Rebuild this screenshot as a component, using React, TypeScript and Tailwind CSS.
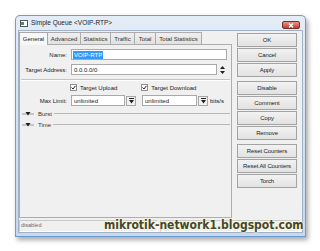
import React from "react";

const F = { fontFamily: '"Liberation Sans", Arial, sans-serif' };

function Check() {
  return (
    <div className="w-[7px] h-[7px] border border-[#8e8f8f] bg-white flex items-center justify-center">
      <svg width="5" height="5" viewBox="0 0 5 5">
        <path d="M0.5 2.5 L2 4 L4.5 0.8" stroke="#222" strokeWidth="1" fill="none" />
      </svg>
    </div>
  );
}

function DropBtn() {
  return (
    <div className="w-[10px] h-[10px] border border-[#a6a6a6] bg-[#f2f2f2] flex items-center justify-center">
      <svg width="5" height="6" viewBox="0 0 5 6">
        <rect x="0" y="0" width="5" height="1" fill="#222" />
        <path d="M0 2 L5 2 L2.5 5.5 Z" fill="#222" />
      </svg>
    </div>
  );
}

function Collapse({ label }: { label: string }) {
  return (
    <div className="flex items-center h-[9px] pl-[2px] pr-[1px]">
      <svg width="12" height="6" viewBox="0 0 12 6" className="shrink-0">
        <rect x="0" y="2.5" width="12" height="1" fill="#9a9a9a" />
        <path d="M3.5 1 L8.5 1 L6 4.5 Z" fill="#1e1e1e" />
      </svg>
      <span className="ml-[4px] text-[6px] text-[#333] leading-none">{label}</span>
      <div className="flex-1 h-px bg-[#b8b8b8] ml-[2px]" />
    </div>
  );
}

const Btn = ({ t }: { t: string }) => (
  <div className="h-[14px] w-[60px] border border-[#a3a3a3] bg-gradient-to-b from-[#f2f2f2] to-[#e2e2e2] flex items-center justify-center text-[6px] text-[#222] leading-none tracking-[-0.1px]">
    {t}
  </div>
);

const tabs: [string, number][] = [
  ["General", 29],
  ["Advanced", 33],
  ["Statistics", 30],
  ["Traffic", 24],
  ["Total", 21],
  ["Total Statistics", 46],
];

export default function App() {
  return (
    <div className="w-[320px] h-[251px] bg-white relative overflow-hidden" style={F}>
      <div className="ml-[15px] mt-[15px] w-[291px] h-[222px] flex flex-col border border-[#8498b3] rounded-t-[5px] bg-gradient-to-b from-[#e4ecf6] to-[#c7d8ed] shadow-[2px_3px_5px_rgba(0,0,0,0.35)] px-[2px] pb-[3px] border-b-[#6d9ad0]">
        {/* title bar */}
        <div className="h-[14px] flex items-center pl-[2px] relative">
          <svg width="8" height="7" viewBox="0 0 8 7">
            <rect x="0.5" y="0.5" width="7" height="6" fill="#fff" stroke="#556" />
            <rect x="1" y="2" width="3" height="3" fill="#3d9a4c" />
          </svg>
          <span className="ml-[3px] text-[6.5px] text-[#1e1e1e] leading-none">Simple Queue &lt;VOIP-RTP&gt;</span>
          <div className="absolute right-[3px] top-[5px] w-[18px] h-[8px] rounded-[2px] border border-[#7a2f28] bg-gradient-to-b from-[#e6968a] to-[#c2392b] flex items-center justify-center">
            <svg width="6" height="5" viewBox="0 0 6 5">
              <path d="M1 0.5 L5 4.5 M5 0.5 L1 4.5" stroke="#fff" strokeWidth="1.3" />
            </svg>
          </div>
        </div>
        {/* client */}
        <div className="flex-1 bg-[#f0f0f0] border border-[#9fb2ca] flex flex-col">
          <div className="flex flex-1">
            <div className="ml-[0px] flex flex-col w-[213px]">
              {/* tabs */}
              <div className="flex h-[13px] items-end">
                {tabs.map(([t, w], i) => (
                  <div
                    key={t}
                    style={{ width: w }}
                    className={
                      i === 0
                        ? "h-[13px] border border-b-0 border-[#a8a8a8] bg-[#f7f7f7] flex items-center justify-center text-[6px] text-[#222] leading-none relative top-px"
                        : "h-[12px] border border-b-0 border-l-0 border-[#acacac] bg-gradient-to-b from-[#efefef] to-[#e1e1e1] flex items-center justify-center text-[6px] text-[#333] leading-none"
                    }
                  >
                    {t}
                  </div>
                ))}
              </div>
              {/* panel */}
              <div className="h-[174px] border border-[#adadad] bg-[#f0f0f0] flex flex-col">
                <div className="flex items-center h-[11px] mt-[4px]">
                  <div className="w-[47px] text-right text-[6px] text-[#222] leading-none">Name:</div>
                  <div className="ml-[4px] w-[156px] h-[11px] border border-[#a9a9a9] bg-white flex items-center pl-px">
                    <span className="bg-[#3399ff] text-white text-[6px] leading-[8px] px-px">VOIP-RTP</span>
                  </div>
                </div>
                <div className="flex items-center h-[11px] mt-[4px]">
                  <div className="w-[47px] text-right text-[6px] text-[#222] leading-none">Target Address:</div>
                  <div className="ml-[4px] w-[146px] h-[11px] border border-[#a9a9a9] bg-white flex items-center pl-[2px] text-[6px] text-[#222] leading-none">
                    0.0.0.0/0
                  </div>
                  <svg width="5" height="8" viewBox="0 0 5 8" className="ml-[3px]">
                    <path d="M0 3 L5 3 L2.5 0 Z M0 5 L5 5 L2.5 8 Z" fill="#222" />
                  </svg>
                </div>
                <div className="mx-px mt-[4px] h-px bg-[#c4c4c4] border-b border-white box-content" />
                <div className="flex items-center h-[9px] mt-[2px] text-[6px] text-[#222] leading-none">
                  <div className="ml-[50px]"><Check /></div>
                  <span className="ml-[3px]">Target Upload</span>
                  <div className="ml-[24px]"><Check /></div>
                  <span className="ml-[3px]">Target Download</span>
                </div>
                <div className="flex items-center h-[11px] mt-[3px] text-[6px] text-[#222] leading-none">
                  <div className="w-[47px] text-right">Max Limit:</div>
                  <div className="ml-[4px] w-[54px] h-[11px] border border-[#a9a9a9] bg-white flex items-center pl-[2px]">unlimited</div>
                  <div className="ml-[1px]"><DropBtn /></div>
                  <div className="ml-[6px] w-[55px] h-[11px] border border-[#a9a9a9] bg-white flex items-center pl-[2px]">unlimited</div>
                  <div className="ml-[1px]"><DropBtn /></div>
                  <span className="ml-[2px]">bits/s</span>
                </div>
                <div className="mt-[3px]"><Collapse label="Burst" /></div>
                <div className="mt-[2px]"><Collapse label="Time" /></div>
              </div>
            </div>
            {/* buttons */}
            <div className="ml-[5px] pt-[2px] flex flex-col">
              <div className="flex flex-col gap-[1px]">
                <Btn t="OK" />
                <Btn t="Cancel" />
                <Btn t="Apply" />
              </div>
              <div className="flex flex-col gap-[1px] mt-[4px]">
                <Btn t="Disable" />
                <Btn t="Comment" />
                <Btn t="Copy" />
                <Btn t="Remove" />
              </div>
              <div className="flex flex-col gap-[1px] mt-[4px]">
                <Btn t="Reset Counters" />
                <Btn t="Reset All Counters" />
                <Btn t="Torch" />
              </div>
            </div>
          </div>
          {/* status bar */}
          <div className="flex h-[12px] mt-[2px] gap-[2px]">
            <div className="w-[139px] border border-[#c9c9c9] border-b-white border-r-white flex items-center pl-px text-[5.5px] text-[#666] leading-none">disabled</div>
            <div className="flex-1 mr-px border border-[#c9c9c9] border-b-white border-r-white" />
          </div>
        </div>
      </div>
      <div
        className="absolute left-[104px] top-[219px] text-[12px] font-bold text-[#45453a] leading-none whitespace-nowrap"
        style={{ fontFamily: '"DejaVu Sans Condensed", "DejaVu Sans", sans-serif', fontStretch: "condensed", textShadow: "0 0 2px #ffffd0, 0 0 1px #ffffd0, 0 0 3px #ffffc0" }}
      >
        mikrotik-network1.blogspot.com
      </div>
    </div>
  );
}
